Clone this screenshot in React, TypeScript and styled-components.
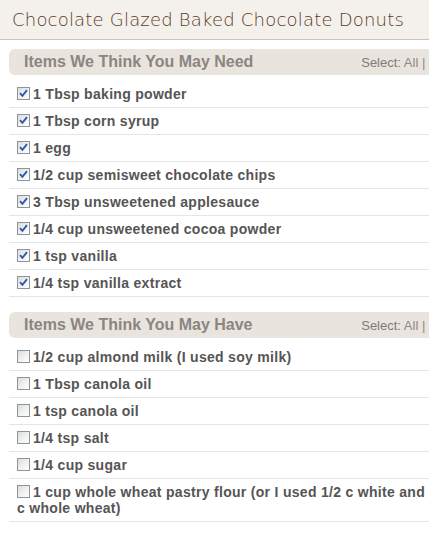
import React from 'react';
import styled, { createGlobalStyle } from 'styled-components';

const GlobalStyle = createGlobalStyle`
  html, body {
    margin: 0;
    padding: 0;
    background: #ffffff;
    overflow: hidden;
  }
  body {
    font-family: "Liberation Sans", Arial, sans-serif;
  }
`;

const Page = styled.div`
  width: 429px;
  height: 534px;
  overflow: hidden;
  background: #ffffff;
`;

const TitleBar = styled.header`
  height: 40px;
  display: flex;
  align-items: center;
  padding-left: 12px;
  background: #f4f1ec;
  border-bottom: 1px solid #c9c6c2;
  box-sizing: border-box;
`;

const Title = styled.h1`
  margin: 0;
  font-family: "DejaVu Sans", "Liberation Sans", sans-serif;
  font-weight: 300;
  font-size: 18px;
  letter-spacing: 0.2px;
  color: #5a3b28;
  white-space: nowrap;
`;

const Section = styled.section<{ $gap: number }>`
  width: 459px;
  margin: ${({ $gap }) => $gap}px 0 0 9px;
`;

const SectionHeader = styled.div`
  height: 26px;
  display: flex;
  align-items: center;
  justify-content: space-between;
  padding: 0 8px 0 15px;
  background: #e9e4de;
  border-radius: 6px;
`;

const SectionTitle = styled.h3`
  margin: 0;
  font-size: 16px;
  font-weight: bold;
  color: #8c8580;
`;

const SelectLinks = styled.div`
  font-size: 13px;
  color: #8e8a86;
  white-space: nowrap;

  b {
    font-weight: normal;
    color: #7f7b77;
  }
`;

const List = styled.ul`
  list-style: none;
  margin: 0;
  padding: 6px 0 0 0;
`;

const Row = styled.li`
  padding: 5px 8px 5px 8px;
  min-height: 16px;
  line-height: 16px;
  font-size: 14px;
  font-weight: bold;
  letter-spacing: 0.3px;
  color: #555555;
  border-bottom: 1px solid #e5e5e5;
`;

const Box = styled.span`
  display: inline-block;
  vertical-align: -1px;
  width: 11px;
  height: 11px;
  margin-right: 3px;
  border: 1px solid #8d959c;
  background: linear-gradient(135deg, #dcdcd7 0%, #f3f3f0 60%, #ffffff 100%);
  position: relative;

  svg {
    position: absolute;
    left: 1px;
    top: 1px;
  }
`;

const CheckBox = ({ checked }: { checked: boolean }) => (
  <Box>
    {checked && (
      <svg width="9" height="9" viewBox="0 0 9 9">
        <path d="M1 4.2 L3.4 6.8 L8 1.2" fill="none" stroke="#2f56b5" strokeWidth="1.9" />
      </svg>
    )}
  </Box>
);

const need = [
  '1 Tbsp baking powder',
  '1 Tbsp corn syrup',
  '1 egg',
  '1/2 cup semisweet chocolate chips',
  '3 Tbsp unsweetened applesauce',
  '1/4 cup unsweetened cocoa powder',
  '1 tsp vanilla',
  '1/4 tsp vanilla extract',
];

const have = [
  '1/2 cup almond milk (I used soy milk)',
  '1 Tbsp canola oil',
  '1 tsp canola oil',
  '1/4 tsp salt',
  '1/4 cup sugar',
  '1 cup whole wheat pastry flour (or I used 1/2 c white and 1/2 c whole wheat)',
];

const ItemSection = ({ title, items, checked, gap }: { title: string; items: string[]; checked: boolean; gap: number }) => (
  <Section $gap={gap}>
    <SectionHeader>
      <SectionTitle>{title}</SectionTitle>
      <SelectLinks>
        <b>Select:</b> All | None
      </SelectLinks>
    </SectionHeader>
    <List>
      {items.map((item) => (
        <Row key={item}>
          <CheckBox checked={checked} />
          {item}
        </Row>
      ))}
    </List>
  </Section>
);

const App: React.FunctionComponent = () => (
  <Page>
    <GlobalStyle />
    <TitleBar>
      <Title>Chocolate Glazed Baked Chocolate Donuts</Title>
    </TitleBar>
    <ItemSection title="Items We Think You May Need" items={need} checked gap={9} />
    <ItemSection title="Items We Think You May Have" items={have} checked={false} gap={15} />
  </Page>
);

export default App;
